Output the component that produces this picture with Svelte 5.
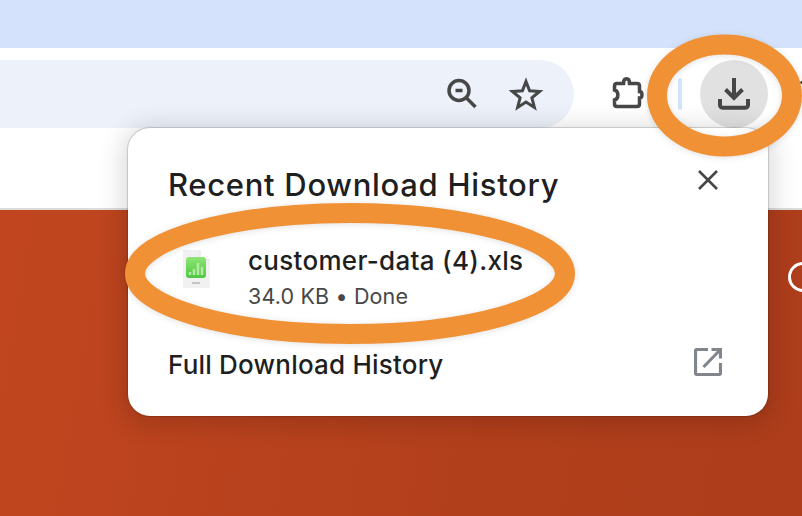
<script>
  const rings = [
    { cx: 724.5, cy: 95.5, rx: 67.5, ry: 51 },
    { cx: 350, cy: 273.5, rx: 215, ry: 60.5 }
  ];
</script>

<div class="page">
  <div class="tabstrip"></div>
  <div class="toolbar">
    <div class="omnibox">
      <svg class="ico zoom-ico" viewBox="0 0 32 32" aria-hidden="true">
        <circle cx="13" cy="12.500" r="10" />
        <path d="M20.500 20 L29.500 29 M9.500 12.500 H16.500" />
      </svg>
      <svg class="ico star-ico" viewBox="0 0 32 32" aria-hidden="true">
        <path d="M16 3.500 L19.600 12.800 L29.600 13.500 L21.900 19.800 L24.400 29.500 L16 24.100 L7.600 29.500 L10.100 19.800 L2.400 13.500 L12.400 12.800 Z" />
      </svg>
    </div>
    <div class="actions">
      <svg class="ico puzzle-ico" viewBox="0 0 32 32" aria-hidden="true">
        <path d="M6 5.500 H12.500 C12.500 -0.800 18.500 -0.800 18.500 5.500 H26 Q28.500 5.500 28.500 8 V13.500 C31.800 13.500 31.800 20 28.500 20 V26 Q28.500 28.500 26 28.500 H6 Q3.500 28.500 3.500 26 V22 C8 21 8 13 3.500 12 V8 Q3.500 5.500 6 5.500 Z" />
      </svg>
      <span class="sep"></span>
      <div class="dl-btn">
        <svg class="ico dl-ico" viewBox="0 0 32 32" aria-hidden="true">
          <path d="M16 0 V20 M7.500 11.500 L16 20 L24.500 11.500" />
          <path d="M2 21 V27 C2 28.500 3 29.700 4.500 29.700 H27.500 C29 29.700 30 28.500 30 27 V21" />
        </svg>
      </div>
      <span class="menu-dot"></span>
    </div>
  </div>
  <div class="bookmarks"></div>
  <div class="content">
    <span class="page-ring"></span>
  </div>

  <section class="popup">
    <header class="popup-head">
      <h2>Recent Download History</h2>
      <svg class="close" viewBox="0 0 20 20" aria-hidden="true"><path d="M1 1 L19 19 M19 1 L1 19" /></svg>
    </header>
    <div class="item">
      <svg class="file" viewBox="0 0 28 38" aria-hidden="true">
        <defs>
          <linearGradient id="tileFill" x1="0" y1="0" x2="0" y2="1">
            <stop offset="0" stop-color="#8ee672" />
            <stop offset="1" stop-color="#4fc645" />
          </linearGradient>
        </defs>
        <path class="sheet" d="M1 0 H18 L28 10 V38 H1 Z" />
        <path class="fold" d="M18 0 V10 H28" />
        <rect class="tile" x="4" y="7" width="20" height="21" rx="3" />
        <path class="bars" d="M8 25 V22 M12 25 V19 M16 25 V13 M20 25 V17" />
        <path class="label" d="M10 33 H18" />
      </svg>
      <div class="meta">
        <div class="name">customer-data (4).xls</div>
        <div class="status">34.0 KB • Done</div>
      </div>
    </div>
    <footer class="popup-foot">
      <span>Full Download History</span>
      <svg class="open" viewBox="0 0 28 28" aria-hidden="true">
        <path class="frame" d="M14 1.500 H3 Q1.500 1.500 1.500 3 V25 Q1.500 26.500 3 26.500 H25 Q26.500 26.500 26.500 25 V15" />
        <path class="frame" d="M17.500 1.500 H26.500 V10.500 M26.500 1.500 L9.500 19" />
      </svg>
    </footer>
  </section>

  <svg class="annot" viewBox="0 0 802 516" aria-hidden="true">
    {#each rings as r}
      <ellipse class="ring" cx={r.cx} cy={r.cy} rx={r.rx} ry={r.ry} />
    {/each}
  </svg>
</div>

<style>
  :global(body) {
    margin: 0;
    background: #fff;
  }
  .page {
    position: relative;
    width: 802px;
    height: 516px;
    overflow: hidden;
    display: flex;
    flex-direction: column;
    font-family: Inter, "Liberation Sans", sans-serif;
    color: #1f1f1f;
  }
  .tabstrip {
    height: 48px;
    background: #d4e3fb;
  }
  .toolbar {
    height: 80px;
    padding-top: 12px;
    box-sizing: border-box;
    display: flex;
    background: #fff;
  }
  .omnibox {
    width: 574px;
    height: 68px;
    box-sizing: border-box;
    border-radius: 0 34px 34px 0;
    background: #edf2fa;
    display: flex;
    align-items: center;
    justify-content: flex-end;
    gap: 32px;
    padding-right: 32px;
  }
  .ico {
    fill: none;
    stroke: #474747;
    stroke-width: 3.500;
    display: block;
    flex: none;
    overflow: visible;
  }
  .zoom-ico { width: 32px; height: 32px; }
  .star-ico { width: 32px; height: 32px; stroke-width: 3; }
  .actions {
    flex: 1;
    display: flex;
    align-items: center;
    height: 68px;
    position: relative;
  }
  .puzzle-ico {
    width: 32px;
    height: 32px;
    margin-left: 37px;
  }
  .sep {
    width: 4px;
    height: 32px;
    margin-left: 35px;
    border-radius: 2px;
    background: #d3e3fd;
  }
  .dl-btn {
    width: 68px;
    height: 68px;
    margin-left: 18px;
    border-radius: 50%;
    background: #e1e1e1;
    display: flex;
    align-items: center;
    justify-content: center;
  }
  .dl-ico { width: 32px; height: 32px; stroke-width: 4; }
  .menu-dot {
    position: absolute;
    right: -1px;
    top: 21px;
    width: 3px;
    height: 3px;
    border-radius: 50%;
    background: #474747;
  }
  .bookmarks {
    height: 80px;
    background: #fff;
    border-bottom: 2px solid #dcdcdc;
  }
  .content {
    flex: 1;
    position: relative;
    background: linear-gradient(100deg, #c1461f 0%, #b23f1c 60%, #ad3d1b 100%);
  }
  .page-ring {
    position: absolute;
    left: 788px;
    top: 52px;
    width: 24px;
    height: 24px;
    border: 3px solid #fff;
    border-radius: 50%;
  }
  .popup {
    position: absolute;
    left: 128px;
    top: 128px;
    width: 640px;
    height: 288px;
    box-sizing: border-box;
    background: #fff;
    border-radius: 22px;
    box-shadow: 0 0 1px 1px rgba(0, 0, 0, 0.16), 0 4px 24px 6px rgba(0, 0, 0, 0.14);
    padding: 0 40px;
    display: flex;
    flex-direction: column;
  }
  .popup-head {
    display: flex;
    justify-content: space-between;
    align-items: flex-start;
    padding-top: 38px;
    height: 112px;
    box-sizing: border-box;
  }
  h2 {
    margin: 0;
    font-size: 31px;
    line-height: 38px;
    font-weight: 500;
    letter-spacing: 0.700px;
  }
  .close {
    width: 20px;
    height: 20px;
    margin: 4px 10px 0 0;
    fill: none;
    stroke: #474747;
    stroke-width: 2.600;
  }
  .item {
    display: flex;
    align-items: center;
    height: 64px;
    gap: 38px;
    margin-top: 6px;
  }
  .file {
    width: 28px;
    height: 38px;
    margin-left: 14px;
    margin-bottom: 18px;
    filter: blur(0.5px);
  }
  .sheet { fill: #f1f1f1; }
  .fold { fill: #fff; stroke: #e3e3e3; stroke-width: 1; }
  .tile { fill: url(#tileFill); }
  .bars { stroke: #b4eba3; stroke-width: 2.500; fill: none; }
  .label { stroke: #c4c4c4; stroke-width: 2; fill: none; }
  .name {
    font-size: 26px;
    line-height: 32px;
    font-weight: 500;
    letter-spacing: 0.300px;
  }
  .status {
    font-size: 21.500px;
    line-height: 30px;
    color: #474747;
    margin-top: 4px;
    letter-spacing: 0.150px;
  }
  .popup-foot {
    display: flex;
    justify-content: space-between;
    align-items: center;
    font-size: 26px;
    font-weight: 500;
    letter-spacing: 0.200px;
    margin-top: 34px;
    height: 40px;
  }
  .open {
    width: 28px;
    height: 28px;
    margin: 0 6px 4px 0;
    fill: none;
  }
  .frame {
    fill: none;
    stroke: #80868b;
    stroke-width: 3.200;
  }
  .annot {
    position: absolute;
    inset: 0;
    width: 802px;
    height: 516px;
    pointer-events: none;
    filter: drop-shadow(0 1px 3px rgba(0, 0, 0, 0.12));
  }
  .ring {
    fill: none;
    stroke: #f19136;
    stroke-width: 20;
  }
</style>
